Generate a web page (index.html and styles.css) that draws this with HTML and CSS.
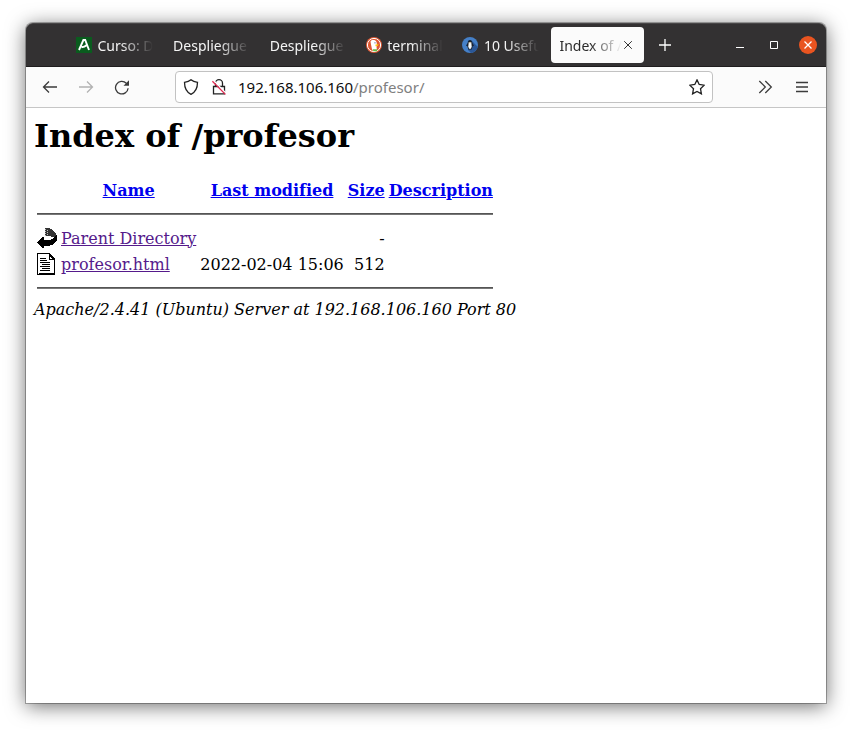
FILE: index.html
```html
<!DOCTYPE html>
<html lang="es">
<head>
<meta charset="utf-8">
<title>Index of /profesor</title>
<link rel="stylesheet" href="styles.css">
</head>
<body>
<div class="window">
  <header class="titlebar">
    <div class="tabs">
      <div class="tab">
        <svg class="favicon" viewBox="0 0 16 16"><rect width="16" height="16" fill="#0a5c1e"/><path d="M3 13 7.400 3h1.800L13 13M5.500 10.200c2-.2 3.800-.9 5-2" fill="none" stroke="#fff" stroke-width="1.900"/></svg>
        <span class="label">Curso: D</span>
      </div>
      <div class="tab"><span class="label">Despliegue</span></div>
      <div class="tab"><span class="label">Despliegue</span></div>
      <div class="tab">
        <svg class="favicon" viewBox="0 0 16 16"><circle cx="8" cy="8" r="8" fill="#de5833"/><circle cx="8" cy="8" r="6.600" fill="none" stroke="#fff" stroke-width="1"/><path d="M4.500 4.500C5.500 2.500 9.500 2.500 10.500 5l.5 3-.5 2 .5 3.500-3.500.8-1.500-2L5 7.500z" fill="#fff"/><path d="M9.500 7.500l3.300-.2-1.300 1.700-2 .2z" fill="#fdc60a"/><path d="M6.800 12.300h4.400v1.900H7.300z" fill="#65bc46"/><circle cx="9" cy="5.800" r=".6" fill="#2d4f8e"/></svg>
        <span class="label">terminal</span>
      </div>
      <div class="tab">
        <svg class="favicon" viewBox="0 0 16 16"><circle cx="8" cy="8" r="8" fill="#4580c8"/><path d="M10 4l5.700 5.700A8 8 0 0 1 9 16l-3-3z" fill="#2b5797"/><path d="M8 3c1.600 0 2.200 1.200 2.300 2.800l1.700 3-1.400.4-.8 3.300H6.200l-.8-3.300L4 8.800l1.700-3C5.800 4.200 6.400 3 8 3z" fill="#182230"/><path d="M6.700 5.200h2.600l.4 4.300-.7 2.200H7l-.7-2.200z" fill="#f4f8fb"/><path d="M7.300 5.300h1.400L8 6.500z" fill="#e8a82b"/></svg>
        <span class="label">10 Usefu</span>
      </div>
      <div class="tab active">
        <span class="label">Index of /</span>
        <svg class="close" viewBox="0 0 8 8"><path d="M.2.200l7.600 7.600m0-7.600l-7.600 7.600"/></svg>
      </div>
    </div>
    <svg class="new-tab" viewBox="0 0 12 12"><path d="M6 0v12M0 6h12"/></svg>
    <div class="controls">
      <svg class="minimize" viewBox="0 0 8 8"><path d="M0 6.500h8"/></svg>
      <svg class="maximize" viewBox="0 0 8 8"><path d="M.5.5h7v7h-7z"/></svg>
      <svg class="quit" viewBox="0 0 18 18"><circle cx="9" cy="9" r="9"/><path d="M5.500 5.500l7 7m0-7l-7 7"/></svg>
    </div>
  </header>

  <nav class="toolbar">
    <svg class="tool back" viewBox="0 0 16 16"><path d="M15 8H1.500M7 2.500 1.500 8 7 13.500"/></svg>
    <svg class="tool forward" viewBox="0 0 16 16"><path d="M1 8h13.500M9 2.500 14.500 8 9 13.500"/></svg>
    <svg class="tool reload" viewBox="0 0 16 16"><path d="M14.100 9.200A6.300 6.300 0 1 1 12.300 4.200"/><path class="solid" d="M15 1.200v5.500H9.500z"/></svg>
    <div class="urlbar">
      <svg class="shield" viewBox="0 0 16 16"><path d="M8 .8C6.400 2.200 4 3 1.500 3.300c0 5.400 1.500 9.700 6.500 12 5-2.300 6.500-6.600 6.500-12C12 3 9.600 2.200 8 .8z"/></svg>
      <svg class="lock" viewBox="0 0 16 16"><path d="M4.500 7.500V4.200a3.500 3.500 0 0 1 7 0v3.300M2.500 7.500h11v7.300h-11z"/><path class="gap" d="M2.600 1.600l12.600 13"/><path class="strike" d="M1.400 2.200l13 13.200"/></svg>
      <span class="url">192.168.106.160<span class="path">/profesor/</span></span>
      <svg class="star" viewBox="0 0 16 16"><path d="M8 .9l2.200 4.600 5 .7-3.700 3.500.9 5.200L8 12.500l-4.400 2.400.9-5.200L.8 6.200l5-.7z"/></svg>
    </div>
    <svg class="tool more" viewBox="0 0 16 16"><path d="M2.300 2l6 6-6 6M8.300 2l6 6-6 6"/></svg>
    <svg class="tool menu" viewBox="0 0 16 16"><path d="M2 3.500h12M2 8h12M2 12.500h12"/></svg>
  </nav>

  <main class="page">
    <h1>Index of /profesor</h1>
    <table>
      <tr><th class="icon"></th><th><a href="#">Name</a></th><th><a href="#">Last modified</a></th><th><a href="#">Size</a></th><th><a href="#">Description</a></th></tr>
      <tr><th colspan="5"><hr></th></tr>
      <tr>
        <td class="icon"><svg viewBox="0 0 20 22" shape-rendering="crispEdges"><path d="M8 1h4l4 2 3 4v2l-3 1-4-1H8z" fill="#333"/><path d="M8 2h1v1H8zM10 3h1v1h-1zM8 4h1v1H8zM10 5h1v1h-1zM8 6h1v1H8zM10 7h1v1h-1zM8 8h1v1H8z" fill="#bbb"/><path d="M20 7v6l-2 3-3 2-4 1H7v2H5l-5-5v-1l5-5h2v3h5l4-1 3-4z" fill="#000"/></svg></td>
        <td><a class="visited" href="#">Parent Directory</a></td><td>&nbsp;</td><td class="num">-</td><td>&nbsp;</td>
      </tr>
      <tr>
        <td class="icon"><svg viewBox="0 0 20 22" shape-rendering="crispEdges"><path d="M.5.5h12l5 5v15.500H.5z" fill="#fff" stroke="#000"/><path d="M2 20.500h15.500V6M12.500 1v5h5M12.500 2l4 4" fill="none" stroke="#000"/><path d="M3 5.500h6M3 7.500h7M3 9.500h10M5 11.500h8M3 13.500h10M5 15.500h8M3 17.500h10" stroke="#000"/></svg></td>
        <td><a class="visited" href="#">profesor.html</a></td><td class="num">2022-02-04 15:06</td><td class="num">512</td><td>&nbsp;</td>
      </tr>
      <tr><th colspan="5"><hr></th></tr>
    </table>
    <address>Apache/2.4.41 (Ubuntu) Server at 192.168.106.160 Port 80</address>
  </main>
</div>
</body>
</html>
```
FILE: styles.css
```css
* { box-sizing: border-box; }
body {
  margin: 0;
  height: 732px;
  padding: 23px 26px 29px;
  background: #fff;
  overflow: hidden;
}
svg { display: block; flex: none; fill: none; }
.window {
  display: flex;
  flex-direction: column;
  width: 800px;
  height: 680px;
  border-radius: 7px 7px 0 0;
  background: #fff;
  box-shadow: 0 0 0 1px rgba(0, 0, 0, .28), 0 3px 20px rgba(0, 0, 0, .58);
}
.titlebar {
  display: flex;
  align-items: center;
  height: 44px;
  padding: 0 9px 0 42px;
  border-radius: 7px 7px 0 0;
  border-top: 1px solid #484647;
  border-bottom: 1px solid #1f1d1e;
  background: #333132;
  color: #f4f4f4;
  font: 14px "Noto Sans", sans-serif;
}
.tabs { display: flex; gap: 3.600px; }
.tab {
  display: flex;
  align-items: center;
  gap: 5px;
  width: 93px;
  height: 36px;
  padding: 0 8px;
  border-radius: 4px;
}
.favicon { width: 16px; height: 16px; }
.label {
  flex: 1;
  min-width: 0;
  overflow: hidden;
  padding-left: .5px;
  white-space: nowrap;
  -webkit-mask-image: linear-gradient(to left, transparent, #000 32px);
  mask-image: linear-gradient(to left, transparent, #000 32px);
}
.active { gap: 2px; padding-right: 12px; background: #fbfbfb; color: #2b2b2b; }
.close { width: 8px; height: 8px; stroke: #333; }
.new-tab { width: 12px; height: 12px; margin-left: 15.500px; stroke: #fff; stroke-width: 1.300; }
.controls { display: flex; align-items: center; margin-left: auto; }
.minimize, .maximize { width: 8px; height: 8px; stroke: #fff; }
.maximize { margin: 0 21px 0 26px; }
.quit { width: 18px; height: 18px; stroke: #fff; stroke-width: 1.300; }
.quit circle { fill: #e95420; stroke: none; }
.toolbar {
  display: flex;
  align-items: center;
  height: 41px;
  padding: 0 16px;
  border-bottom: 1px solid #c6c6c6;
  background: #fbfbfb;
}
.tool { width: 16px; height: 16px; stroke: #3b3b3b; stroke-width: 1.300; }
.forward { margin-left: 20px; stroke: #b2b2b2; }
.reload { margin-left: 20px; }
.solid { fill: #3b3b3b; stroke: none; }
.urlbar {
  display: flex;
  align-items: center;
  width: 538px;
  height: 32px;
  margin-left: 45px;
  padding: 0 7px;
  border: 1px solid #c2c2c2;
  border-radius: 4px;
  background: #fff;
}
.shield, .lock, .star { width: 16px; height: 16px; stroke: #222; stroke-width: 1.300; }
.lock { margin-left: 12px; }
.lock .gap { stroke: #fff; stroke-width: 1.400; }
.lock .strike { stroke: #e22850; }
.url { flex: 1; margin-left: 11px; color: #0c0c0c; font: 15px "Noto Sans", sans-serif; }
.path { color: #808080; }
.more { margin-left: 44px; }
.menu { margin-left: 21px; }
.page { padding: 9px 8px 8px; color: #000; font: 16px "DejaVu Serif", serif; }
h1 { margin: 0 0 21px; font-size: 32px; line-height: 38px; }
table { line-height: 19px; }
td, th { white-space: nowrap; }
.icon { width: 22px; height: 24px; vertical-align: top; }
.icon svg { width: 20px; height: 22px; }
.num { text-align: right; }
td:nth-child(2) { padding-right: 1px; }
a { color: #0000ee; text-decoration: underline; }
a.visited { color: #551a8b; }
hr { height: 2px; margin: 8px 0; border: 0; border-top: 1px solid #555; border-bottom: 1px solid #777; }
```
